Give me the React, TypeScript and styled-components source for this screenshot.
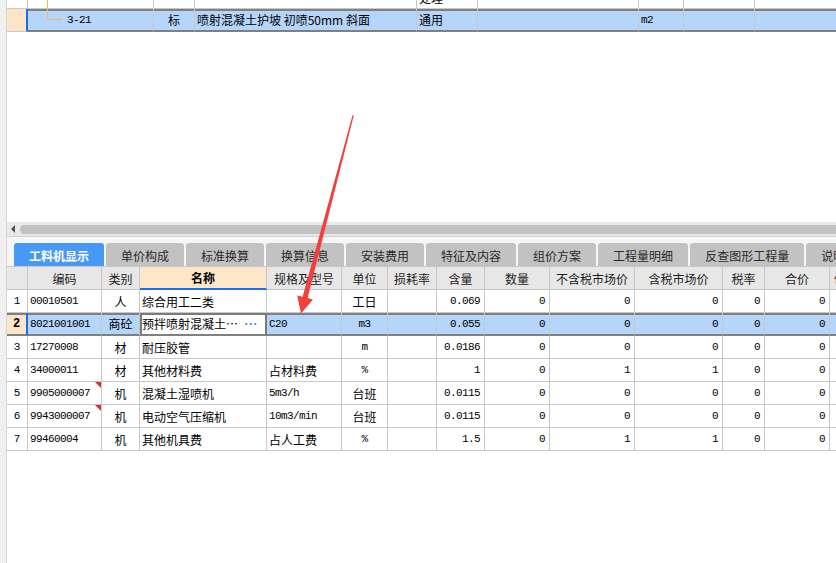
import React from 'react';
import styled, { createGlobalStyle, css } from 'styled-components';

const GlobalStyle = createGlobalStyle`
  html, body {
    margin: 0;
    padding: 0;
    background: #fff;
  }
  body {
    font-family: "Noto Sans CJK SC", "Liberation Sans", sans-serif;
    font-size: 12px;
    color: #000;
  }
`;

const UPPER_COLS = '21px 126px 41px 222px 61px 161px 45px 71px 90px';
const LOWER_COLS = '21px 74px 38px 127px 75px 46px 49px 48px 65px 85px 88px 42px 65px 80px';

const Page = styled.div`
  position: relative;
  display: flex;
  width: 836px;
  height: 563px;
  overflow: hidden;
  background: #fff;
`;

const SideStrip = styled.div`
  flex: none;
  width: 6px;
  background: #f0f0f0;
  border-right: 1px solid #d6d6d6;
`;

const Main = styled.div`
  flex: 1;
  min-width: 0;
  display: flex;
  flex-direction: column;
  overflow: hidden;
`;

const UpperPane = styled.div`
  height: 222px;
  overflow: hidden;
`;

const UpperInner = styled.div`
  margin-top: -14px;
`;

const Row = styled.div<{ $cols: string; $h?: number }>`
  display: grid;
  grid-template-columns: ${p => p.$cols};
  height: ${p => p.$h ?? 23}px;
  width: max-content;
`;

type Align = 'left' | 'center' | 'right';

const Cell = styled.div<{
  $align?: Align;
  $mono?: boolean;
  $sel?: boolean;
  $active?: boolean;
  $flag?: boolean;
  $padL?: number;
}>`
  position: relative;
  box-sizing: border-box;
  display: flex;
  align-items: center;
  justify-content: ${p =>
    p.$align === 'center' ? 'center' : p.$align === 'right' ? 'flex-end' : 'flex-start'};
  padding: 0 ${p => (p.$align === 'right' ? 4 : 2)}px 0 ${p => p.$padL ?? 2}px;
  border-right: 1px solid #c8c8c8;
  border-bottom: 1px solid #c8c8c8;
  white-space: nowrap;
  overflow: hidden;
  font-size: 12px;
  ${p =>
    p.$mono &&
    css`
      font-family: "Liberation Mono", "DejaVu Sans Mono", monospace;
      font-size: 11px;
      letter-spacing: -0.6px;
    `}
  ${p =>
    p.$sel &&
    css`
      background: #b5d5fb;
      border-bottom: 2px solid #808080;
      box-shadow: inset 0 2px 0 #808080;
    `}
  ${p =>
    p.$active &&
    css`
      background: #fff;
      box-shadow: inset 0 2px 0 #7a7a7a, inset 2px 0 0 #7a7a7a, inset -1px 0 0 #7a7a7a;
      border-right-color: #7a7a7a;
    `}
  ${p =>
    p.$flag &&
    css`
      &::after {
        content: '';
        position: absolute;
        top: 0;
        right: 0;
        border-top: 6px solid #e8262b;
        border-left: 6px solid transparent;
      }
    `}
`;

const RowNum = styled(Cell)<{ $cur?: boolean }>`
  justify-content: center;
  padding: 0;
  font-family: "Liberation Mono", "DejaVu Sans Mono", monospace;
  font-size: 11px;
  ${p =>
    p.$cur &&
    css`
      background: #fde5c8;
      font-weight: bold;
      font-size: 12px;
      border-right: 2px solid #1a6cf0;
    `}
`;

/* tree connector drawn in the code column: vertical guide, elbow on the leaf */
const TreeMark = styled.span<{ $elbow?: boolean }>`
  position: relative;
  flex: none;
  align-self: stretch;
  width: ${p => (p.$elbow ? 39 : 20)}px;
  &::before {
    content: '';
    position: absolute;
    left: 19px;
    top: -2px;
    width: 1px;
    height: ${p => (p.$elbow ? 13 : 30)}px;
    background: #f8b462;
  }
  ${p =>
    p.$elbow &&
    css`
      &::after {
        content: '';
        position: absolute;
        left: 19px;
        top: 10px;
        width: 15px;
        height: 1px;
        background: #f8b462;
      }
    `}
`;

const Scroll = styled.div`
  flex: none;
  height: 14px;
  background: #e9e9e9;
  display: flex;
  align-items: center;
  padding-left: 4px;
  gap: 5px;
`;

const ScrollArrow = styled.div`
  width: 0;
  height: 0;
  border-top: 4px solid transparent;
  border-bottom: 4px solid transparent;
  border-right: 4px solid #505050;
`;

const ScrollThumb = styled.div`
  flex: 1;
  height: 9px;
  background: #c1c1c1;
  border-radius: 5px 0 0 5px;
`;

const TabStrip = styled.div`
  flex: none;
  display: flex;
  gap: 2px;
  height: 30px;
  box-sizing: border-box;
  padding: 6px 0 0 7px;
  border-top: 1px solid #d2d2d2;
  background: #f6f6f6;
  overflow: hidden;
`;

const Tab = styled.div<{ $active?: boolean }>`
  flex: none;
  height: 24px;
  padding: 0 15px;
  display: flex;
  align-items: center;
  border-radius: 3px 3px 0 0;
  white-space: nowrap;
  font-size: 12px;
  background: ${p => (p.$active ? '#4899f6' : '#c2c2c2')};
  color: ${p => (p.$active ? '#fff' : '#2a2a2a')};
  font-weight: ${p => (p.$active ? 'bold' : 'normal')};
`;

const HeadCell = styled(Cell)<{ $hot?: boolean; $edge?: boolean }>`
  justify-content: ${p => (p.$edge ? 'flex-start' : 'center')};
  padding-left: ${p => (p.$edge ? 4 : 2)}px;
  background: #e7e7e7;
  color: #1e1e1e;
  ${p =>
    p.$hot &&
    css`
      background: #fee6c8;
      font-weight: bold;
      color: #000;
      border-bottom: 2px solid #1a6cf0;
    `}
`;

const LowerTable = styled.div`
  border-top: 1px solid #c8c8c8;
`;

const NameText = styled.span`
  min-width: 0;
  overflow: hidden;
`;

const Dots = styled.span`
  flex: none;
  margin-left: auto;
  padding-right: 6px;
  font-family: "Liberation Sans", sans-serif;
  font-size: 12px;
  color: #3b8be0;
  font-weight: bold;
  letter-spacing: 0.5px;
`;

const ArrowLayer = styled.svg`
  position: absolute;
  left: 0;
  top: 0;
  pointer-events: none;
`;

const isAscii = (s: string) => /^[\x00-\x7f]+$/.test(s);

type Item = {
  n: string;
  code: string;
  type: string;
  name: string;
  spec: string;
  unit: string;
  qty: string;
  p1: string;
  p2: string;
  flag?: boolean;
  sel?: boolean;
};

const items: Item[] = [
  { n: '1', code: '00010501', type: '人', name: '综合用工二类', spec: '', unit: '工日', qty: '0.069', p1: '0', p2: '0' },
  { n: '2', code: '8021001001', type: '商砼', name: '预拌喷射混凝土…', spec: 'C20', unit: 'm3', qty: '0.055', p1: '0', p2: '0', sel: true },
  { n: '3', code: '17270008', type: '材', name: '耐压胶管', spec: '', unit: 'm', qty: '0.0186', p1: '0', p2: '0' },
  { n: '4', code: '34000011', type: '材', name: '其他材料费', spec: '占材料费', unit: '%', qty: '1', p1: '1', p2: '1' },
  { n: '5', code: '9905000007', type: '机', name: '混凝土湿喷机', spec: '5m3/h', unit: '台班', qty: '0.0115', p1: '0', p2: '0', flag: true },
  { n: '6', code: '9943000007', type: '机', name: '电动空气压缩机', spec: '10m3/min', unit: '台班', qty: '0.0115', p1: '0', p2: '0', flag: true },
  { n: '7', code: '99460004', type: '机', name: '其他机具费', spec: '占人工费', unit: '%', qty: '1.5', p1: '1', p2: '1' },
];

const heads = ['', '编码', '类别', '名称', '规格及型号', '单位', '损耗率', '含量', '数量', '不含税市场价', '含税市场价', '税率', '合价', '供货方式'];

const tabs = ['工料机显示', '单价构成', '标准换算', '换算信息', '安装费用', '特征及内容', '组价方案', '工程量明细', '反查图形工程量', '说明信息'];

function UpperGrid() {
  return (
    <UpperPane>
      <UpperInner>
        <Row $cols={UPPER_COLS}>
          <RowNum />
          <Cell $padL={0}>
            <TreeMark />
          </Cell>
          <Cell />
          <Cell />
          <Cell>处理</Cell>
          <Cell />
          <Cell />
          <Cell />
          <Cell />
        </Row>
        <Row $cols={UPPER_COLS}>
          <RowNum $cur />
          <Cell $sel $mono $padL={0}>
            <TreeMark $elbow />
            3-21
          </Cell>
          <Cell $sel $align="center">标</Cell>
          <Cell $sel>喷射混凝土护坡 初喷50mm 斜面</Cell>
          <Cell $sel>通用</Cell>
          <Cell $sel />
          <Cell $sel $mono>m2</Cell>
          <Cell $sel />
          <Cell $sel />
        </Row>
      </UpperInner>
    </UpperPane>
  );
}

function LowerGrid() {
  return (
    <LowerTable>
      <Row $cols={LOWER_COLS} $h={23}>
        {heads.map((h, i) => (
          <HeadCell key={i} $hot={h === '名称'} $edge={i === heads.length - 1}>
            {h}
          </HeadCell>
        ))}
      </Row>
      {items.map(it => (
        <Row key={it.n} $cols={LOWER_COLS}>
          <RowNum $cur={it.sel} $sel={it.sel}>{it.n}</RowNum>
          <Cell $sel={it.sel} $mono $flag={it.flag}>{it.code}</Cell>
          <Cell $sel={it.sel} $align="center">{it.type}</Cell>
          <Cell $sel={it.sel} $active={it.sel}>
            <NameText>{it.name}</NameText>
            {it.sel && <Dots>···</Dots>}
          </Cell>
          <Cell $sel={it.sel} $mono={isAscii(it.spec)}>{it.spec}</Cell>
          <Cell $sel={it.sel} $align="center" $mono={isAscii(it.unit)}>{it.unit}</Cell>
          <Cell $sel={it.sel} />
          <Cell $sel={it.sel} $align="right" $mono>{it.qty}</Cell>
          <Cell $sel={it.sel} $align="right" $mono>0</Cell>
          <Cell $sel={it.sel} $align="right" $mono>{it.p1}</Cell>
          <Cell $sel={it.sel} $align="right" $mono>{it.p2}</Cell>
          <Cell $sel={it.sel} $align="right" $mono>0</Cell>
          <Cell $sel={it.sel} $align="right" $mono>0</Cell>
          <Cell $sel={it.sel} />
        </Row>
      ))}
    </LowerTable>
  );
}

export default function App() {
  return (
    <>
      <GlobalStyle />
      <Page>
        <SideStrip />
        <Main>
          <UpperGrid />
          <Scroll>
            <ScrollArrow />
            <ScrollThumb />
          </Scroll>
          <TabStrip>
            {tabs.map((t, i) => (
              <Tab key={t} $active={i === 0}>
                {t}
              </Tab>
            ))}
          </TabStrip>
          <LowerGrid />
        </Main>
        <ArrowLayer width="836" height="563" viewBox="0 0 836 563">
          <polygon
            points="352.6,115 353.8,115.4 307.6,298.1 313,299.6 301,313.5 297.2,295.4 302.6,296.8"
            fill="#f1403d"
          />
        </ArrowLayer>
      </Page>
    </>
  );
}
